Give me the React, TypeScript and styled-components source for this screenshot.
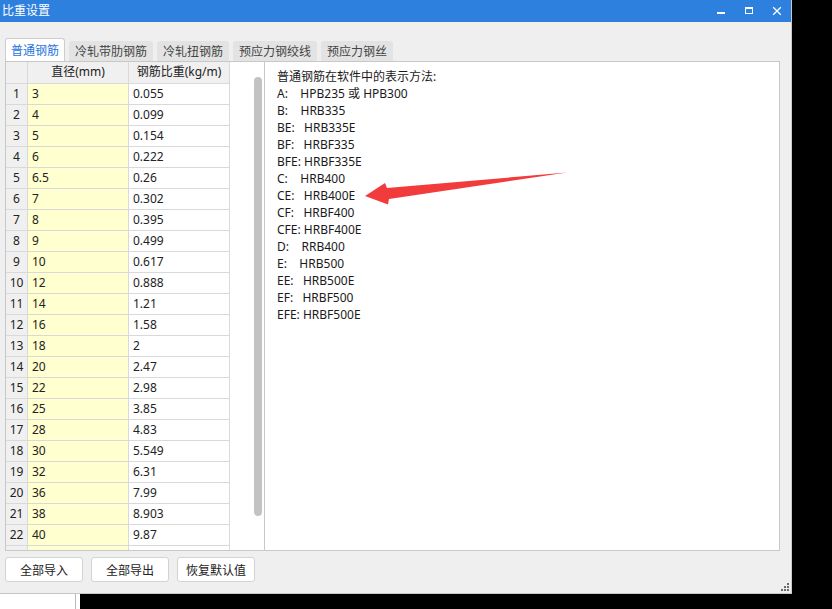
import React from 'react';
import styled, { createGlobalStyle } from 'styled-components';

const GlobalStyle = createGlobalStyle`
  html, body {
    margin: 0;
    padding: 0;
    background: #000;
  }
  body {
    font-family: "Noto Sans", "Noto Sans CJK SC", sans-serif;
  }
`;

const Desktop = styled.div`
  width: 832px;
  height: 609px;
  background: #000;
  overflow: hidden;
`;

const Window = styled.div`
  width: 792px;
  height: 594px;
  box-sizing: border-box;
  background: #efefef;
  border-right: 1px solid #c9c9c9;
  border-bottom: 1px solid #c4c7ce;
  display: flex;
  flex-direction: column;
`;

const TitleBar = styled.div`
  height: 22px;
  flex-shrink: 0;
  background: #2e80df;
  color: #fff;
  display: flex;
  align-items: center;
  padding-left: 2px;
  font-size: 12px;
`;

const TitleText = styled.span`
  flex: 1;
  line-height: 18px;
`;

const WindowControls = styled.div`
  display: flex;
  height: 100%;
`;

const ControlButton = styled.div`
  width: 28px;
  height: 100%;
  display: flex;
  align-items: center;
  justify-content: center;
`;

const TabBar = styled.div`
  margin-top: 16px;
  height: 23px;
  flex-shrink: 0;
  display: flex;
  align-items: flex-end;
  gap: 4px;
  padding-left: 5px;
`;

const Tab = styled.div<{ $active?: boolean }>`
  box-sizing: border-box;
  height: ${(p) => (p.$active ? '23px' : '20px')};
  padding: 0 ${(p) => (p.$active ? '5px' : '6px')};
  display: flex;
  align-items: center;
  font-size: 12px;
  border-radius: 3px 3px 0 0;
  background: ${(p) => (p.$active ? '#fff' : '#e3e3e3')};
  color: ${(p) => (p.$active ? '#1f74da' : '#444')};
  border: ${(p) => (p.$active ? '1px solid #cdcdcd' : 'none')};
  border-bottom: none;
`;

const Body = styled.div`
  height: 490px;
  flex-shrink: 0;
  display: flex;
  margin: 0 11px 0 5px;
`;

const TablePanel = styled.div`
  width: 260px;
  box-sizing: border-box;
  border: 1px solid #c8c8c8;
  background: #fff;
  display: flex;
  overflow: hidden;
`;

const Grid = styled.div`
  width: 224px;
  flex-shrink: 0;
  display: grid;
  grid-template-columns: 22px 101px 101px;
  grid-template-rows: 22px;
  grid-auto-rows: 21px;
  align-content: start;
`;

const Cell = styled.div<{ $tone?: 'head' | 'index' | 'yellow' | 'plain' }>`
  box-sizing: border-box;
  border-right: 1px solid #d9d9d9;
  border-bottom: 1px solid #d9d9d9;
  font-size: 12px;
  line-height: 20px;
  white-space: nowrap;
  overflow: hidden;
  color: #222;
  padding: ${(p) => (p.$tone === 'head' || p.$tone === 'index' ? '0' : '0 4px')};
  text-align: ${(p) => (p.$tone === 'head' || p.$tone === 'index' ? 'center' : 'left')};
  background: ${(p) =>
    p.$tone === 'head' || p.$tone === 'index'
      ? '#f0f0f0'
      : p.$tone === 'yellow'
      ? '#ffffd0'
      : '#fff'};
`;

const ScrollTrack = styled.div`
  flex: 1;
  display: flex;
  justify-content: flex-end;
  padding: 15px 2px 34px 0;
`;

const ScrollThumb = styled.div`
  width: 8px;
  border-radius: 4px;
  background: #c3c3c3;
`;

const TextPanel = styled.div`
  flex: 1;
  position: relative;
  box-sizing: border-box;
  border: 1px solid #c8c8c8;
  border-left: none;
  background: #fff;
  padding: 6px 12px 0 12px;
`;

const Line = styled.div`
  font-size: 12px;
  line-height: 17px;
  color: #1a1a1a;
  white-space: pre;
`;

const ArrowOverlay = styled.svg`
  position: absolute;
  left: 95px;
  top: 105px;
  width: 215px;
  height: 45px;
`;

const Footer = styled.div`
  flex: 1;
  display: flex;
  align-items: flex-start;
  gap: 8px;
  padding: 6px 2px 2px 5px;
`;

const ActionButton = styled.button`
  width: 78px;
  height: 25px;
  box-sizing: border-box;
  padding: 0;
  background: #fff;
  border: 1px solid #d3d3d3;
  border-radius: 3px;
  font-family: inherit;
  font-size: 12px;
  color: #222;
`;

const Grip = styled.svg`
  margin-left: auto;
  align-self: flex-end;
  width: 8px;
  height: 8px;
`;

const Behind = styled.div`
  display: flex;
  height: 15px;
`;

const BehindPane = styled.div<{ $w: number; $edge?: boolean }>`
  width: ${(p) => p.$w}px;
  background: #fff;
  border-right: ${(p) => (p.$edge ? '1px solid #b8b8b8' : 'none')};
`;

const tabs = ['普通钢筋', '冷轧带肋钢筋', '冷轧扭钢筋', '预应力钢绞线', '预应力钢丝'];

const rows: [string, string][] = [
  ['3', '0.055'],
  ['4', '0.099'],
  ['5', '0.154'],
  ['6', '0.222'],
  ['6.5', '0.26'],
  ['7', '0.302'],
  ['8', '0.395'],
  ['9', '0.499'],
  ['10', '0.617'],
  ['12', '0.888'],
  ['14', '1.21'],
  ['16', '1.58'],
  ['18', '2'],
  ['20', '2.47'],
  ['22', '2.98'],
  ['25', '3.85'],
  ['28', '4.83'],
  ['30', '5.549'],
  ['32', '6.31'],
  ['36', '7.99'],
  ['38', '8.903'],
  ['40', '9.87'],
];

const lines = [
  '普通钢筋在软件中的表示方法:',
  'A:    HPB235 或 HPB300',
  'B:    HRB335',
  'BE:   HRB335E',
  'BF:   HRBF335',
  'BFE: HRBF335E',
  'C:    HRB400',
  'CE:   HRB400E',
  'CF:   HRBF400',
  'CFE: HRBF400E',
  'D:    RRB400',
  'E:    HRB500',
  'EE:   HRB500E',
  'EF:   HRBF500',
  'EFE: HRBF500E',
];

const App = () => {
  return (
    <Desktop>
      <GlobalStyle />
      <Window>
        <TitleBar>
          <TitleText>比重设置</TitleText>
          <WindowControls>
            <ControlButton>
              <svg width="10" height="10" viewBox="0 0 10 10">
                <rect x="1" y="6" width="8" height="2" fill="#fff" />
              </svg>
            </ControlButton>
            <ControlButton>
              <svg width="10" height="10" viewBox="0 0 10 10">
                <rect x="1.5" y="1.5" width="7" height="6" fill="none" stroke="#fff" strokeWidth="1" />
                <rect x="1" y="1" width="8" height="2" fill="#fff" />
              </svg>
            </ControlButton>
            <ControlButton>
              <svg width="10" height="10" viewBox="0 0 10 10">
                <path d="M1.2 1.2 L8.8 8.8 M8.8 1.2 L1.2 8.8" stroke="#fff" strokeWidth="1.3" />
              </svg>
            </ControlButton>
          </WindowControls>
        </TitleBar>

        <TabBar>
          {tabs.map((t, i) => (
            <Tab key={t} $active={i === 0}>
              {t}
            </Tab>
          ))}
        </TabBar>

        <Body>
          <TablePanel>
            <Grid>
              <Cell $tone="head" />
              <Cell $tone="head">直径(mm)</Cell>
              <Cell $tone="head">钢筋比重(kg/m)</Cell>
              {rows.map(([d, w], i) => (
                <React.Fragment key={d}>
                  <Cell $tone="index">{i + 1}</Cell>
                  <Cell $tone="yellow">{d}</Cell>
                  <Cell $tone="plain">{w}</Cell>
                </React.Fragment>
              ))}
              {/* next row, scrolled mostly out of view */}
              <Cell $tone="index" />
              <Cell $tone="yellow" />
              <Cell $tone="plain" />
            </Grid>
            <ScrollTrack>
              <ScrollThumb />
            </ScrollTrack>
          </TablePanel>

          <TextPanel>
            {lines.map((l) => (
              <Line key={l}>{l}</Line>
            ))}
            <ArrowOverlay viewBox="0 0 215 45">
              <polygon
                points="5,29 25,16 27,21 207,5.5 29,32 28,37.5"
                fill="#f23b3b"
              />
            </ArrowOverlay>
          </TextPanel>
        </Body>

        <Footer>
          <ActionButton>全部导入</ActionButton>
          <ActionButton>全部导出</ActionButton>
          <ActionButton>恢复默认值</ActionButton>
          <Grip viewBox="0 0 8 8">
            <rect x="6" y="0" width="2" height="2" fill="#6b6b6b" />
            <rect x="3" y="3" width="2" height="2" fill="#6b6b6b" />
            <rect x="6" y="3" width="2" height="2" fill="#6b6b6b" />
            <rect x="0" y="6" width="2" height="2" fill="#6b6b6b" />
            <rect x="3" y="6" width="2" height="2" fill="#6b6b6b" />
            <rect x="6" y="6" width="2" height="2" fill="#6b6b6b" />
          </Grip>
        </Footer>
      </Window>
      <Behind>
        <BehindPane $w={75} $edge />
        <BehindPane $w={4} />
      </Behind>
    </Desktop>
  );
};

export default App;
